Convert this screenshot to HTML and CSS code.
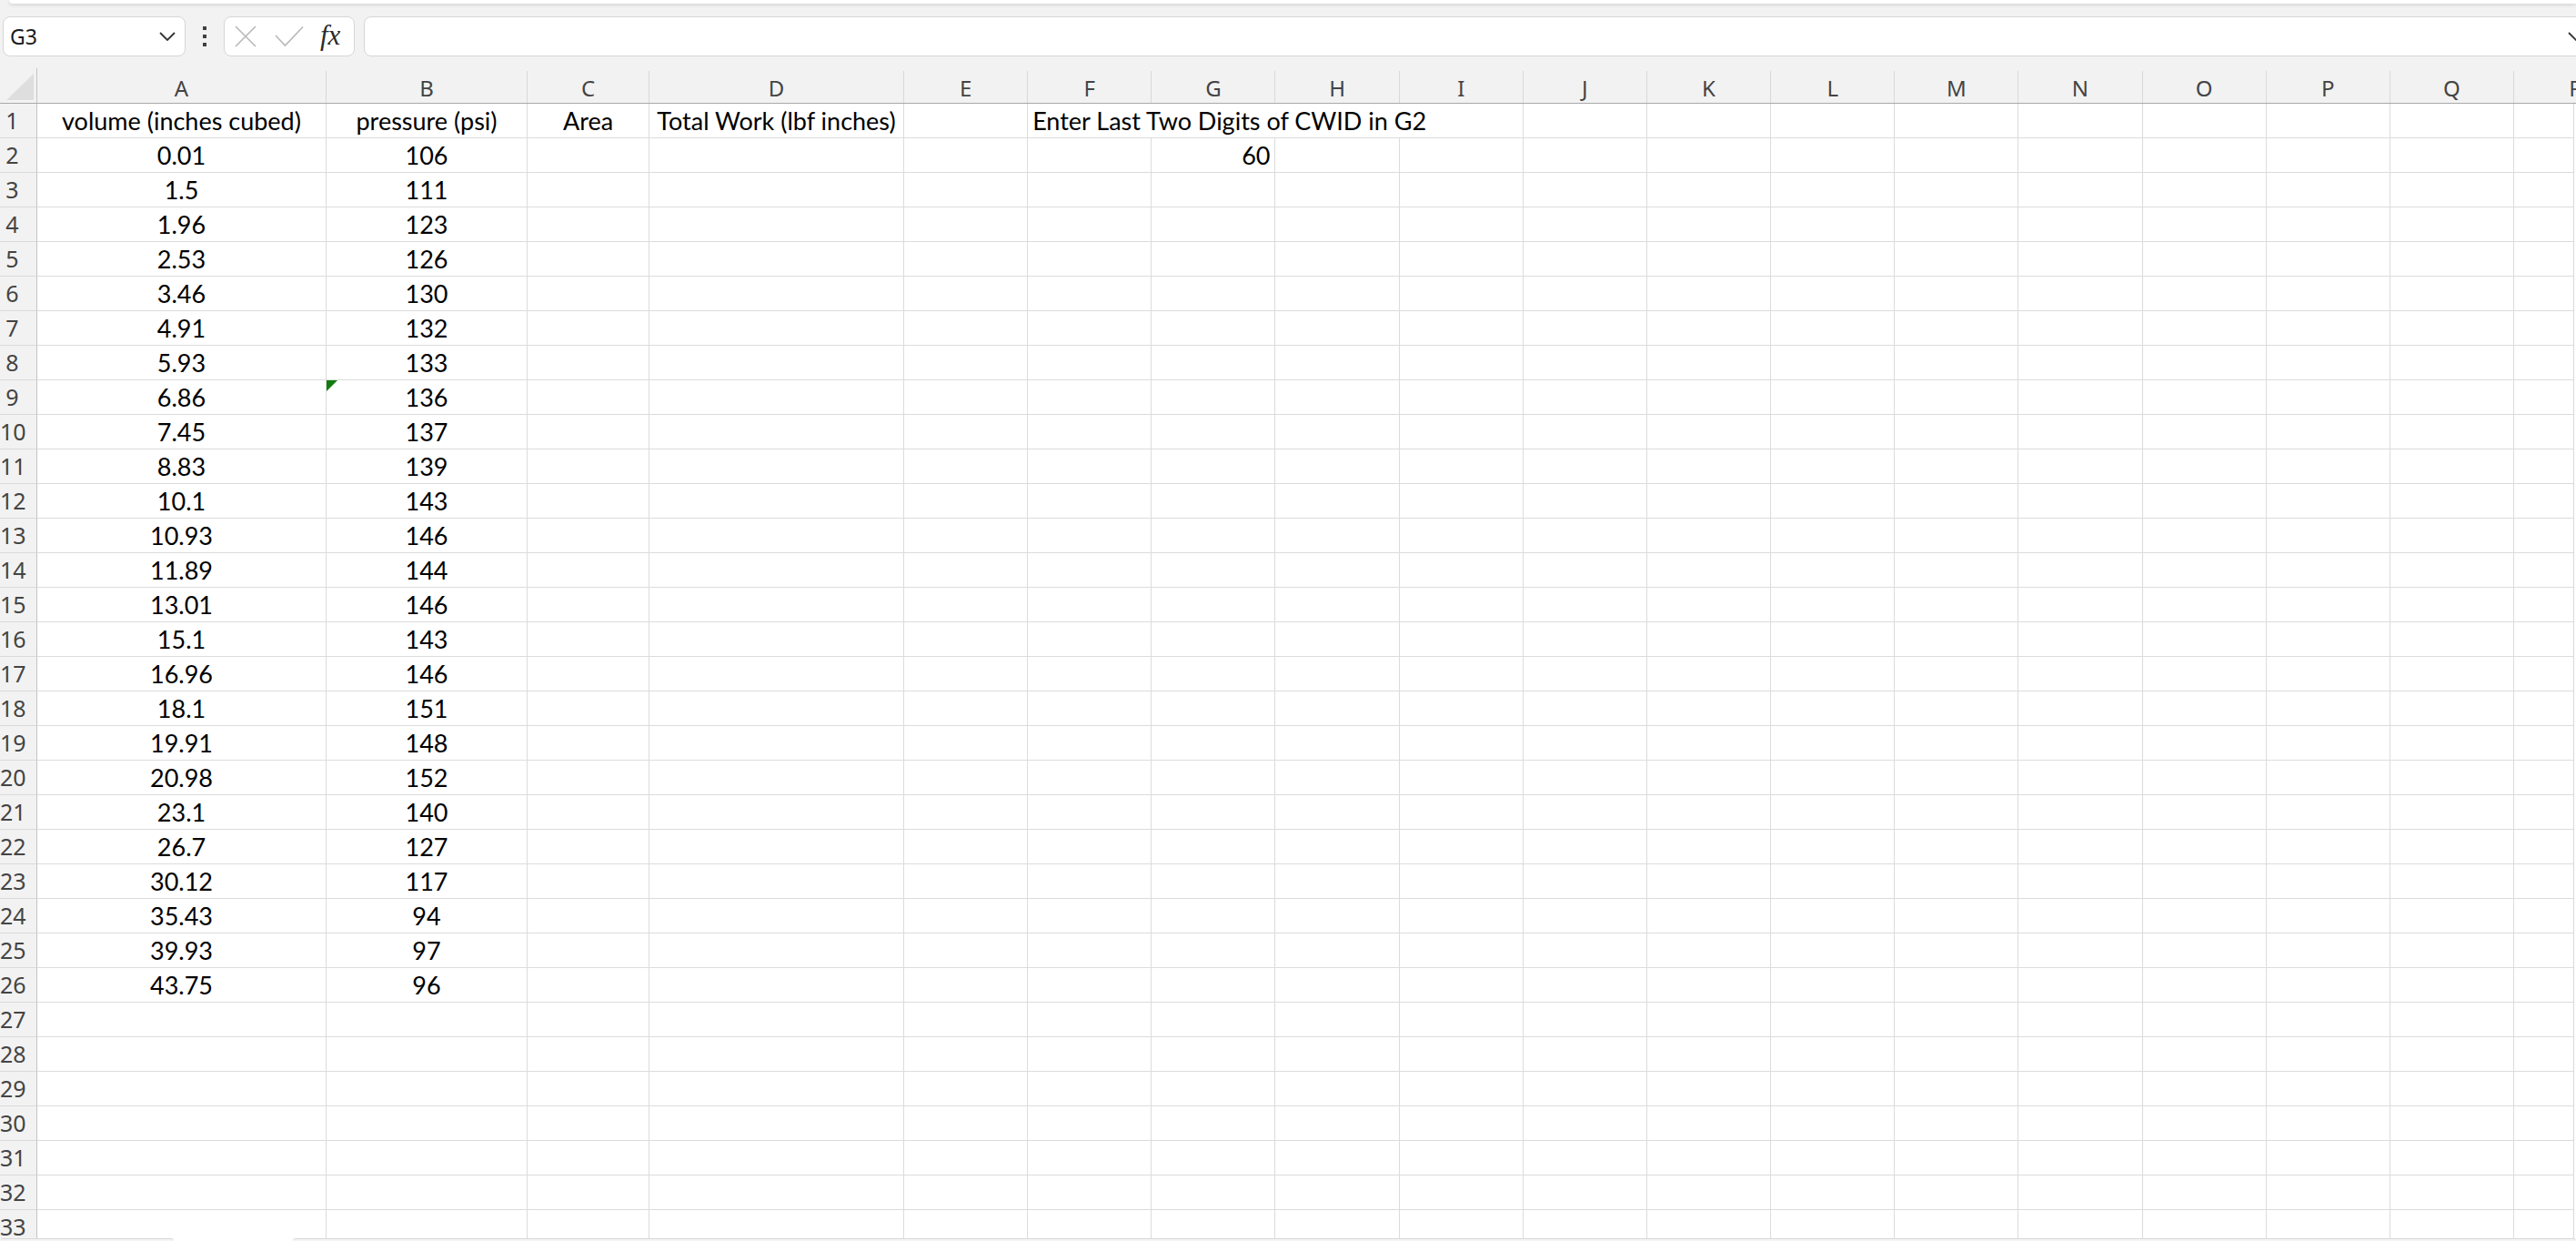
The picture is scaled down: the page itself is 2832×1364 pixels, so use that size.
FILE: index.html
```html
<!DOCTYPE html>
<html lang="en">
<head>
<meta charset="utf-8">
<title>Sheet</title>
<link rel="stylesheet" href="styles.css">
</head>
<body>
<div class="app">
  <div class="top">
    <div class="ribbon-edge"></div>
    <div class="fbar">
      <div class="namebox"><span>G3</span><svg class="chev" width="18" height="10" viewBox="0 0 18 10"><path d="M1 1 L9 9 L17 1" fill="none" stroke="#333" stroke-width="1.8"/></svg></div>
      <div class="vdots"><span></span><span></span><span></span></div>
      <div class="fxbox">
        <svg width="24" height="24" viewBox="0 0 24 24"><path d="M1 1 L23 23 M23 1 L1 23" fill="none" stroke="#b8b8b8" stroke-width="1.6"/></svg>
        <svg class="chk" width="32" height="24" viewBox="0 0 32 24"><path d="M1 11 L11.5 22 L31 1.5" fill="none" stroke="#b8b8b8" stroke-width="1.6"/></svg>
        <span class="fx">fx</span>
      </div>
      <div class="finput"><svg class="chev" width="18" height="10" viewBox="0 0 18 10"><path d="M1 1 L9 9 L17 1" fill="none" stroke="#333" stroke-width="1.8"/></svg></div>
    </div>
    <div class="colhead">
      <div class="corner"><svg width="40" height="38" viewBox="0 0 40 38"><polygon points="37,6 37,35 7,35" fill="#dedede"/></svg></div>
      <div class="h">A</div><div class="h">B</div><div class="h">C</div><div class="h">D</div><div class="h">E</div><div class="h">F</div><div class="h">G</div><div class="h">H</div><div class="h">I</div><div class="h">J</div><div class="h">K</div><div class="h">L</div><div class="h">M</div><div class="h">N</div><div class="h">O</div><div class="h">P</div><div class="h">Q</div><div class="h">R</div>
    </div>
  </div>
  <div class="sheet">
    <div class="row"><div class="rh">1</div><div class="c ctr">volume (inches cubed)</div><div class="c ctr">pressure (psi)</div><div class="c ctr">Area</div><div class="c ctr">Total Work (lbf inches)</div><div class="c"></div><div class="c span4">Enter Last Two Digits of CWID in G2</div><div class="c"></div><div class="c"></div><div class="c"></div><div class="c"></div><div class="c"></div><div class="c"></div><div class="c"></div><div class="c"></div><div class="c"></div></div>
    <div class="row"><div class="rh">2</div><div class="c ctr">0.01</div><div class="c ctr">106</div><div class="c"></div><div class="c"></div><div class="c"></div><div class="c"></div><div class="c rt">60</div><div class="c"></div><div class="c"></div><div class="c"></div><div class="c"></div><div class="c"></div><div class="c"></div><div class="c"></div><div class="c"></div><div class="c"></div><div class="c"></div><div class="c"></div></div>
    <div class="row"><div class="rh">3</div><div class="c ctr">1.5</div><div class="c ctr">111</div><div class="c"></div><div class="c"></div><div class="c"></div><div class="c"></div><div class="c"></div><div class="c"></div><div class="c"></div><div class="c"></div><div class="c"></div><div class="c"></div><div class="c"></div><div class="c"></div><div class="c"></div><div class="c"></div><div class="c"></div><div class="c"></div></div>
    <div class="row"><div class="rh">4</div><div class="c ctr">1.96</div><div class="c ctr">123</div><div class="c"></div><div class="c"></div><div class="c"></div><div class="c"></div><div class="c"></div><div class="c"></div><div class="c"></div><div class="c"></div><div class="c"></div><div class="c"></div><div class="c"></div><div class="c"></div><div class="c"></div><div class="c"></div><div class="c"></div><div class="c"></div></div>
    <div class="row"><div class="rh">5</div><div class="c ctr">2.53</div><div class="c ctr">126</div><div class="c"></div><div class="c"></div><div class="c"></div><div class="c"></div><div class="c"></div><div class="c"></div><div class="c"></div><div class="c"></div><div class="c"></div><div class="c"></div><div class="c"></div><div class="c"></div><div class="c"></div><div class="c"></div><div class="c"></div><div class="c"></div></div>
    <div class="row"><div class="rh">6</div><div class="c ctr">3.46</div><div class="c ctr">130</div><div class="c"></div><div class="c"></div><div class="c"></div><div class="c"></div><div class="c"></div><div class="c"></div><div class="c"></div><div class="c"></div><div class="c"></div><div class="c"></div><div class="c"></div><div class="c"></div><div class="c"></div><div class="c"></div><div class="c"></div><div class="c"></div></div>
    <div class="row"><div class="rh">7</div><div class="c ctr">4.91</div><div class="c ctr">132</div><div class="c"></div><div class="c"></div><div class="c"></div><div class="c"></div><div class="c"></div><div class="c"></div><div class="c"></div><div class="c"></div><div class="c"></div><div class="c"></div><div class="c"></div><div class="c"></div><div class="c"></div><div class="c"></div><div class="c"></div><div class="c"></div></div>
    <div class="row"><div class="rh">8</div><div class="c ctr">5.93</div><div class="c ctr">133</div><div class="c"></div><div class="c"></div><div class="c"></div><div class="c"></div><div class="c"></div><div class="c"></div><div class="c"></div><div class="c"></div><div class="c"></div><div class="c"></div><div class="c"></div><div class="c"></div><div class="c"></div><div class="c"></div><div class="c"></div><div class="c"></div></div>
    <div class="row"><div class="rh">9</div><div class="c ctr">6.86</div><div class="c ctr err">136</div><div class="c"></div><div class="c"></div><div class="c"></div><div class="c"></div><div class="c"></div><div class="c"></div><div class="c"></div><div class="c"></div><div class="c"></div><div class="c"></div><div class="c"></div><div class="c"></div><div class="c"></div><div class="c"></div><div class="c"></div><div class="c"></div></div>
    <div class="row"><div class="rh">10</div><div class="c ctr">7.45</div><div class="c ctr">137</div><div class="c"></div><div class="c"></div><div class="c"></div><div class="c"></div><div class="c"></div><div class="c"></div><div class="c"></div><div class="c"></div><div class="c"></div><div class="c"></div><div class="c"></div><div class="c"></div><div class="c"></div><div class="c"></div><div class="c"></div><div class="c"></div></div>
    <div class="row"><div class="rh">11</div><div class="c ctr">8.83</div><div class="c ctr">139</div><div class="c"></div><div class="c"></div><div class="c"></div><div class="c"></div><div class="c"></div><div class="c"></div><div class="c"></div><div class="c"></div><div class="c"></div><div class="c"></div><div class="c"></div><div class="c"></div><div class="c"></div><div class="c"></div><div class="c"></div><div class="c"></div></div>
    <div class="row"><div class="rh">12</div><div class="c ctr">10.1</div><div class="c ctr">143</div><div class="c"></div><div class="c"></div><div class="c"></div><div class="c"></div><div class="c"></div><div class="c"></div><div class="c"></div><div class="c"></div><div class="c"></div><div class="c"></div><div class="c"></div><div class="c"></div><div class="c"></div><div class="c"></div><div class="c"></div><div class="c"></div></div>
    <div class="row"><div class="rh">13</div><div class="c ctr">10.93</div><div class="c ctr">146</div><div class="c"></div><div class="c"></div><div class="c"></div><div class="c"></div><div class="c"></div><div class="c"></div><div class="c"></div><div class="c"></div><div class="c"></div><div class="c"></div><div class="c"></div><div class="c"></div><div class="c"></div><div class="c"></div><div class="c"></div><div class="c"></div></div>
    <div class="row"><div class="rh">14</div><div class="c ctr">11.89</div><div class="c ctr">144</div><div class="c"></div><div class="c"></div><div class="c"></div><div class="c"></div><div class="c"></div><div class="c"></div><div class="c"></div><div class="c"></div><div class="c"></div><div class="c"></div><div class="c"></div><div class="c"></div><div class="c"></div><div class="c"></div><div class="c"></div><div class="c"></div></div>
    <div class="row"><div class="rh">15</div><div class="c ctr">13.01</div><div class="c ctr">146</div><div class="c"></div><div class="c"></div><div class="c"></div><div class="c"></div><div class="c"></div><div class="c"></div><div class="c"></div><div class="c"></div><div class="c"></div><div class="c"></div><div class="c"></div><div class="c"></div><div class="c"></div><div class="c"></div><div class="c"></div><div class="c"></div></div>
    <div class="row"><div class="rh">16</div><div class="c ctr">15.1</div><div class="c ctr">143</div><div class="c"></div><div class="c"></div><div class="c"></div><div class="c"></div><div class="c"></div><div class="c"></div><div class="c"></div><div class="c"></div><div class="c"></div><div class="c"></div><div class="c"></div><div class="c"></div><div class="c"></div><div class="c"></div><div class="c"></div><div class="c"></div></div>
    <div class="row"><div class="rh">17</div><div class="c ctr">16.96</div><div class="c ctr">146</div><div class="c"></div><div class="c"></div><div class="c"></div><div class="c"></div><div class="c"></div><div class="c"></div><div class="c"></div><div class="c"></div><div class="c"></div><div class="c"></div><div class="c"></div><div class="c"></div><div class="c"></div><div class="c"></div><div class="c"></div><div class="c"></div></div>
    <div class="row"><div class="rh">18</div><div class="c ctr">18.1</div><div class="c ctr">151</div><div class="c"></div><div class="c"></div><div class="c"></div><div class="c"></div><div class="c"></div><div class="c"></div><div class="c"></div><div class="c"></div><div class="c"></div><div class="c"></div><div class="c"></div><div class="c"></div><div class="c"></div><div class="c"></div><div class="c"></div><div class="c"></div></div>
    <div class="row"><div class="rh">19</div><div class="c ctr">19.91</div><div class="c ctr">148</div><div class="c"></div><div class="c"></div><div class="c"></div><div class="c"></div><div class="c"></div><div class="c"></div><div class="c"></div><div class="c"></div><div class="c"></div><div class="c"></div><div class="c"></div><div class="c"></div><div class="c"></div><div class="c"></div><div class="c"></div><div class="c"></div></div>
    <div class="row"><div class="rh">20</div><div class="c ctr">20.98</div><div class="c ctr">152</div><div class="c"></div><div class="c"></div><div class="c"></div><div class="c"></div><div class="c"></div><div class="c"></div><div class="c"></div><div class="c"></div><div class="c"></div><div class="c"></div><div class="c"></div><div class="c"></div><div class="c"></div><div class="c"></div><div class="c"></div><div class="c"></div></div>
    <div class="row"><div class="rh">21</div><div class="c ctr">23.1</div><div class="c ctr">140</div><div class="c"></div><div class="c"></div><div class="c"></div><div class="c"></div><div class="c"></div><div class="c"></div><div class="c"></div><div class="c"></div><div class="c"></div><div class="c"></div><div class="c"></div><div class="c"></div><div class="c"></div><div class="c"></div><div class="c"></div><div class="c"></div></div>
    <div class="row"><div class="rh">22</div><div class="c ctr">26.7</div><div class="c ctr">127</div><div class="c"></div><div class="c"></div><div class="c"></div><div class="c"></div><div class="c"></div><div class="c"></div><div class="c"></div><div class="c"></div><div class="c"></div><div class="c"></div><div class="c"></div><div class="c"></div><div class="c"></div><div class="c"></div><div class="c"></div><div class="c"></div></div>
    <div class="row"><div class="rh">23</div><div class="c ctr">30.12</div><div class="c ctr">117</div><div class="c"></div><div class="c"></div><div class="c"></div><div class="c"></div><div class="c"></div><div class="c"></div><div class="c"></div><div class="c"></div><div class="c"></div><div class="c"></div><div class="c"></div><div class="c"></div><div class="c"></div><div class="c"></div><div class="c"></div><div class="c"></div></div>
    <div class="row"><div class="rh">24</div><div class="c ctr">35.43</div><div class="c ctr">94</div><div class="c"></div><div class="c"></div><div class="c"></div><div class="c"></div><div class="c"></div><div class="c"></div><div class="c"></div><div class="c"></div><div class="c"></div><div class="c"></div><div class="c"></div><div class="c"></div><div class="c"></div><div class="c"></div><div class="c"></div><div class="c"></div></div>
    <div class="row"><div class="rh">25</div><div class="c ctr">39.93</div><div class="c ctr">97</div><div class="c"></div><div class="c"></div><div class="c"></div><div class="c"></div><div class="c"></div><div class="c"></div><div class="c"></div><div class="c"></div><div class="c"></div><div class="c"></div><div class="c"></div><div class="c"></div><div class="c"></div><div class="c"></div><div class="c"></div><div class="c"></div></div>
    <div class="row"><div class="rh">26</div><div class="c ctr">43.75</div><div class="c ctr">96</div><div class="c"></div><div class="c"></div><div class="c"></div><div class="c"></div><div class="c"></div><div class="c"></div><div class="c"></div><div class="c"></div><div class="c"></div><div class="c"></div><div class="c"></div><div class="c"></div><div class="c"></div><div class="c"></div><div class="c"></div><div class="c"></div></div>
    <div class="row"><div class="rh">27</div><div class="c"></div><div class="c"></div><div class="c"></div><div class="c"></div><div class="c"></div><div class="c"></div><div class="c"></div><div class="c"></div><div class="c"></div><div class="c"></div><div class="c"></div><div class="c"></div><div class="c"></div><div class="c"></div><div class="c"></div><div class="c"></div><div class="c"></div><div class="c"></div></div>
    <div class="row"><div class="rh">28</div><div class="c"></div><div class="c"></div><div class="c"></div><div class="c"></div><div class="c"></div><div class="c"></div><div class="c"></div><div class="c"></div><div class="c"></div><div class="c"></div><div class="c"></div><div class="c"></div><div class="c"></div><div class="c"></div><div class="c"></div><div class="c"></div><div class="c"></div><div class="c"></div></div>
    <div class="row"><div class="rh">29</div><div class="c"></div><div class="c"></div><div class="c"></div><div class="c"></div><div class="c"></div><div class="c"></div><div class="c"></div><div class="c"></div><div class="c"></div><div class="c"></div><div class="c"></div><div class="c"></div><div class="c"></div><div class="c"></div><div class="c"></div><div class="c"></div><div class="c"></div><div class="c"></div></div>
    <div class="row"><div class="rh">30</div><div class="c"></div><div class="c"></div><div class="c"></div><div class="c"></div><div class="c"></div><div class="c"></div><div class="c"></div><div class="c"></div><div class="c"></div><div class="c"></div><div class="c"></div><div class="c"></div><div class="c"></div><div class="c"></div><div class="c"></div><div class="c"></div><div class="c"></div><div class="c"></div></div>
    <div class="row"><div class="rh">31</div><div class="c"></div><div class="c"></div><div class="c"></div><div class="c"></div><div class="c"></div><div class="c"></div><div class="c"></div><div class="c"></div><div class="c"></div><div class="c"></div><div class="c"></div><div class="c"></div><div class="c"></div><div class="c"></div><div class="c"></div><div class="c"></div><div class="c"></div><div class="c"></div></div>
    <div class="row"><div class="rh">32</div><div class="c"></div><div class="c"></div><div class="c"></div><div class="c"></div><div class="c"></div><div class="c"></div><div class="c"></div><div class="c"></div><div class="c"></div><div class="c"></div><div class="c"></div><div class="c"></div><div class="c"></div><div class="c"></div><div class="c"></div><div class="c"></div><div class="c"></div><div class="c"></div></div>
    <div class="row"><div class="rh">33</div><div class="c"></div><div class="c"></div><div class="c"></div><div class="c"></div><div class="c"></div><div class="c"></div><div class="c"></div><div class="c"></div><div class="c"></div><div class="c"></div><div class="c"></div><div class="c"></div><div class="c"></div><div class="c"></div><div class="c"></div><div class="c"></div><div class="c"></div><div class="c"></div></div>
  </div>
  <div class="tabbar"><div class="tb tb1"></div><div class="tb tb2"></div></div>
</div>
</body>
</html>
```

FILE: styles.css
```css
* { box-sizing: border-box; }
html, body { margin: 0; padding: 0; }
body {
  width: 2832px;
  height: 1364px;
  overflow: hidden;
  background: #ffffff;
  font-family: "Noto Sans", "Open Sans", sans-serif;
}
.app {
  display: flex;
  flex-direction: column;
  width: 2832px;
  height: 1364px;
  overflow: hidden;
}
.top { background: #f2f2f2; flex: none; }
.ribbon-edge {
  height: 4px;
  margin-left: 10px;
  background: #ffffff;
  border-radius: 0 0 0 8px;
  box-shadow: 0 1px 4px rgba(0, 0, 0, 0.16);
}
.fbar {
  display: flex;
  align-items: center;
  height: 44px;
  margin-top: 14px;
  padding-left: 3px;
}
.namebox {
  flex: none;
  width: 201px;
  height: 44px;
  background: #fff;
  border: 1px solid #d6d6d6;
  border-radius: 8px;
  display: flex;
  align-items: center;
  justify-content: space-between;
  padding: 0 10px 0 7px;
  font-size: 23px;
  color: #1b1b1b;
}
.vdots {
  flex: none;
  display: flex;
  flex-direction: column;
  gap: 5px;
  margin: 0 19px;
}
.vdots span {
  display: block;
  width: 4px;
  height: 4px;
  background: #404040;
}
.fxbox {
  flex: none;
  width: 144px;
  height: 44px;
  background: #fff;
  border: 1px solid #d6d6d6;
  border-radius: 8px;
  display: flex;
  align-items: center;
  padding-left: 11px;
}
.fxbox .chk { margin-left: 20px; }
.fx {
  margin-left: 18px;
  font-family: "Liberation Serif", "DejaVu Serif", serif;
  font-style: italic;
  font-size: 31px;
  color: #2b2b2b;
  line-height: 1;
  padding-bottom: 3px;
}
.finput {
  flex: none;
  margin-left: 10px;
  width: 2460px;
  height: 44px;
  background: #fff;
  border: 1px solid #d6d6d6;
  border-radius: 8px;
  display: flex;
  align-items: center;
  justify-content: flex-end;
  padding-right: 18px;
}
.colhead {
  display: grid;
  grid-template-columns: 41px 318px 221px 134px 280px repeat(14, 136.17px);
  height: 52px;
  align-items: end;
  border-bottom: 1px solid #a8a8a8;
  overflow: hidden;
}
.corner {
  height: 38px;
  border-right: 1px solid #c4c4c4;
}
.corner svg { display: block; }
.h {
  height: 35px;
  border-right: 1px solid #d9d9d9;
  text-align: center;
  font-size: 24px;
  line-height: 35px;
  padding-top: 1px;
  color: #444444;
}
.sheet {
  flex: 1;
  min-height: 0;
  width: 2830px;
  border-right: 1px solid #d9d9d9;
  overflow: hidden;
}
.row {
  display: grid;
  grid-template-columns: 41px 318px 221px 134px 280px repeat(14, 136.17px);
  height: 38px;
}
.rh {
  background: #f2f2f2;
  border-right: 1px solid #c4c4c4;
  border-bottom: 1px solid #dadada;
  font-size: 25px;
  line-height: 37px;
  color: #444444;
  text-align: center;
  padding-right: 13px;
  white-space: nowrap;
}
.c {
  border-right: 1px solid #dcdcdc;
  border-bottom: 1px solid #dcdcdc;
  font-family: "Lato", "Noto Sans", sans-serif;
  font-size: 27px;
  line-height: 37px;
  color: #000000;
  white-space: nowrap;
  padding: 0 5px;
}
.ctr { text-align: center; }
.rt { text-align: right; }
.span4 { grid-column: span 4; }
.err { position: relative; }
.err::before {
  content: "";
  position: absolute;
  left: 0;
  top: 0;
  width: 12px;
  height: 12px;
  background: #107c10;
  clip-path: polygon(0 0, 100% 0, 0 100%);
}
.tabbar {
  flex: none;
  height: 3px;
  display: flex;
  background: #ffffff;
}
.tb {
  height: 3px;
  background: #f4f4f4;
  border-top: 1px solid #d8d8d8;
  border-radius: 6px 6px 0 0;
}
.tb1 { width: 191px; }
.tb2 { margin-left: 131px; flex: 1; }
```
